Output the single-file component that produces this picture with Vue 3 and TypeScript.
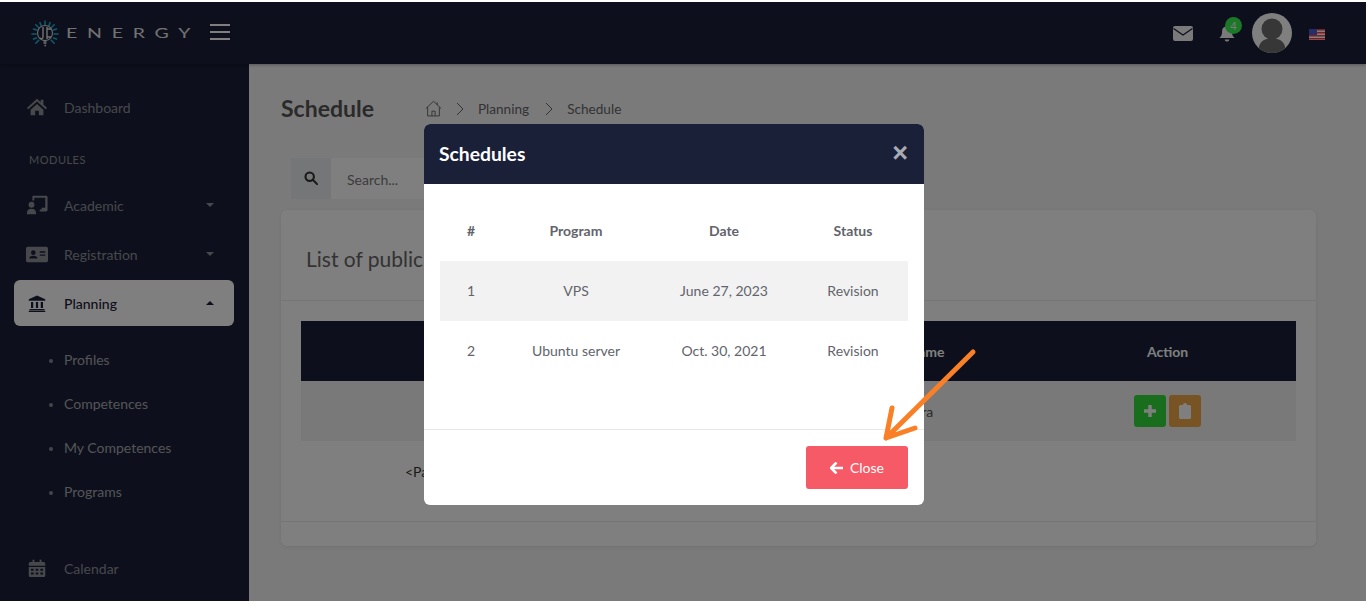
<template>
  <div class="page">
    <header class="topbar">
      <div class="brand">
        <svg class="logo" viewBox="0 0 28 28" width="28" height="28" fill="none">
          <g stroke="#1cb4d8" stroke-width="1.600" stroke-linecap="round">
            <path d="M14 1v4M1 14h4M23 14h4M4.800 4.800l3 3M23.200 4.800l-3 3M4.800 23.200l3-3M23.200 23.200l-3-3M9 2.500l1 3M19 2.500l-1 3M2.500 9l3 1M25.500 9l-3 1M2.500 19l3-1M25.500 19l-3-1" />
          </g>
          <circle cx="14" cy="13" r="7.500" stroke="#cfcfcf" stroke-width="1.200" />
          <path d="M12 7v10c0 2-2 2-3 1M16 7v12M20 9h-4M20 17h-4M12.500 21h3M12.500 23h3M13.500 25.500h1.500" stroke="#e6e6e6" stroke-width="1.400" />
        </svg>
        <span class="brand-name">ENERGY</span>
        <span class="burger"><i></i><i></i><i></i></span>
      </div>
      <div class="top-actions">
        <svg class="mail" viewBox="0 0 20 15" width="20" height="15">
          <rect width="20" height="15" rx="2" fill="#f4f4f4" />
          <path d="M0.500 2.500 10 9l9.500-6.500" fill="none" stroke="#1a2038" stroke-width="1.300" />
        </svg>
        <span class="bell">
          <svg viewBox="0 0 18 20" width="18" height="18">
            <path d="M9 1.500c3.500 0 5.500 2.500 5.500 6 0 3.500 1 5 3 7H.500c2-2 3-3.500 3-7 0-3.500 2-6 5.500-6z" fill="#f4f4f4" />
            <path d="M6.500 16h5c0 3-5 3-5 0z" fill="#f4f4f4" />
          </svg>
          <b class="badge">4</b>
        </span>
        <svg class="avatar" viewBox="0 0 40 40" width="40" height="40">
          <defs>
            <clipPath id="avatar-clip"><circle cx="20" cy="20" r="20" /></clipPath>
          </defs>
          <circle cx="20" cy="20" r="20" fill="#fff" />
          <g clip-path="url(#avatar-clip)" fill="#6e6e6e">
            <circle cx="20" cy="16" r="10.500" />
            <path d="M6 40c0-9 4-13 9-14h10c5 1 9 5 9 14z" />
          </g>
        </svg>
        <svg class="flag" viewBox="0 0 16 11" width="16" height="11">
          <rect width="16" height="11" fill="#fff" />
          <path d="M0 .7h16M0 3.700h16M0 6.700h16M0 9.700h16" stroke="#ff3a48" stroke-width="1.400" />
          <rect width="8" height="6" fill="#4a5cd0" />
        </svg>
      </div>
    </header>

    <div class="layout">
      <aside class="sidebar">
        <a class="nav-item">
          <svg class="nav-icon" viewBox="0 0 24 24"><path :d="icons.home" /></svg>
          <span>Dashboard</span>
        </a>
        <div class="nav-label">MODULES</div>
        <a
          v-for="item in modules"
          :key="item.label"
          class="nav-item"
          :class="{ active: item.active }"
        >
          <svg class="nav-icon" :class="{ small: item.active }" viewBox="0 0 24 24"><path :d="icons[item.icon]" fill-rule="evenodd" /></svg>
          <span>{{ item.label }}</span>
          <i class="caret" :class="{ up: item.active }"></i>
        </a>
        <ul class="subnav">
          <li v-for="sub in subItems" :key="sub">{{ sub }}</li>
        </ul>
        <a class="nav-item">
          <svg class="nav-icon small" viewBox="0 0 24 24"><path :d="icons.calendar" fill-rule="evenodd" /></svg>
          <span>Calendar</span>
        </a>
      </aside>

      <main class="content">
        <div class="title-row">
          <h1>Schedule</h1>
          <nav class="crumbs">
            <svg viewBox="0 0 16 16" width="17" height="17" fill="none" stroke="#666" stroke-width="0.900">
              <path d="M.800 8 8 1.200 15.200 8M2.500 6.800V15h11V6.800M6.500 15v-4.500h3V15M11.500 2.200v2.400" />
            </svg>
            <svg class="chev" viewBox="0 0 8 14" width="8" height="14" fill="none" stroke="#666"><path d="M1 1l6 6-6 6" /></svg>
            <span>Planning</span>
            <svg class="chev last" viewBox="0 0 8 14" width="8" height="14" fill="none" stroke="#666"><path d="M1 1l6 6-6 6" /></svg>
            <span>Schedule</span>
          </nav>
        </div>

        <div class="search">
          <span class="search-icon">
            <svg viewBox="0 0 16 16" width="14" height="14" fill="none" stroke="#333" stroke-width="2.400">
              <circle cx="6.500" cy="6.500" r="4.800" /><path d="M10 10l5 5" stroke-linecap="round" />
            </svg>
          </span>
          <span class="search-input">Search...</span>
        </div>

        <section class="card">
          <h2>List of public programs</h2>
          <div class="card-body">
            <div class="grid-row grid-head">
              <span></span><span>Name</span><span class="action-head">Action</span>
            </div>
            <div class="grid-row grid-data">
              <span></span>
              <span class="name-cell">Sara</span>
              <span class="actions">
                <button class="square green">
                  <svg viewBox="0 0 14 14" width="14" height="14"><path d="M5.300 1h3.400v4.300H13v3.400H8.700V13H5.300V8.700H1V5.300h4.300z" fill="#fff" /></svg>
                </button>
                <button class="square orange">
                  <svg viewBox="0 0 12 16" width="12" height="16">
                    <path d="M1.500 2H4a2 2 0 0 1 4 0h2.500A1.500 1.500 0 0 1 12 3.500v11a1.500 1.500 0 0 1-1.500 1.500h-9A1.500 1.500 0 0 1 0 14.500v-11A1.500 1.500 0 0 1 1.500 2z" fill="#fff" />
                  </svg>
                </button>
              </span>
            </div>
            <p class="pager">&lt;Pagination /&gt;</p>
          </div>
          <div class="card-foot"></div>
        </section>
      </main>
    </div>

    <div class="backdrop">
      <div class="modal">
        <div class="modal-head">
          <h3>Schedules</h3>
          <span class="modal-x">×</span>
        </div>
        <div class="modal-body">
          <table>
            <thead>
              <tr>
                <th class="c-num">#</th>
                <th class="c-prog">Program</th>
                <th class="c-date">Date</th>
                <th>Status</th>
              </tr>
            </thead>
            <tbody>
              <tr v-for="row in schedules" :key="row.id">
                <td>{{ row.id }}</td>
                <td>{{ row.program }}</td>
                <td>{{ row.date }}</td>
                <td>{{ row.status }}</td>
              </tr>
            </tbody>
          </table>
        </div>
        <div class="modal-foot">
          <button class="close-btn">
            <svg viewBox="0 0 14 12" width="14" height="12">
              <path d="M6.500.5 1 6l5.500 5.500M1.500 6H13" fill="none" stroke="#fff" stroke-width="2.600" />
            </svg>
            Close
          </button>
        </div>
      </div>
    </div>
  </div>

  <svg class="annotation" viewBox="0 0 1366 606" width="1366" height="606" fill="none" stroke="#f98026" stroke-width="5" stroke-linecap="round" stroke-linejoin="round">
    <path d="M973 352 886 438M892 408l-6 30 29-10" />
  </svg>
</template>

<script setup lang="ts">
type IconName = 'home' | 'academic' | 'card' | 'bank' | 'calendar'

const icons: Record<IconName, string> = {
  home: 'M12 3 1 13l1.500 1.500L12 6l9.500 8.500L23 13l-4-3.600V4h-3v2.700zM5 15l7-6.200 7 6.200v6h-5v-5h-4v5H5z',
  academic:
    'M8 2h14a1.500 1.500 0 0 1 1.500 1.500v14A1.500 1.500 0 0 1 22 19h-7v-2h2v-2h4V4H9v3H7V3a1 1 0 0 1 1-1zM6 8.500a3.200 3.200 0 1 1 0 6.400 3.200 3.200 0 0 1 0-6.400zM1 21c0-3.500 2-5 5-5s5 1.500 5 5v1H1z',
  card:
    'M2 4h20a2 2 0 0 1 2 2v13a2 2 0 0 1-2 2H2a2 2 0 0 1-2-2V6a2 2 0 0 1 2-2zm6 4a2.500 2.500 0 1 0 0 5 2.500 2.500 0 0 0 0-5zm-4.500 9h9c0-2-2-3-4.500-3s-4.500 1-4.500 3zM15 9v1.500h6V9zm0 3.500V14h6v-1.500z',
  bank: 'M12 2 1 7v2h22V7zM4 10.500h3v8H4zM10.500 10.500h3v8h-3zM17 10.500h3v8h-3zM2 20h20v1.500H2zM1 22.300h22V24H1z',
  calendar:
    'M6 1h2.500v3H15.500V1H18v3h3a2 2 0 0 1 2 2v3H1V6a2 2 0 0 1 2-2h3zM1 10.500h22V22a2 2 0 0 1-2 2H3a2 2 0 0 1-2-2zM4 13v2.500h3.500V13zm6.200 0v2.500h3.500V13zm6.300 0v2.500H20V13zM4 18v2.500h3.500V18zm6.200 0v2.500h3.500V18zm6.300 0v2.500H20V18z',
}

const modules: { label: string; icon: IconName; active?: boolean }[] = [
  { label: 'Academic', icon: 'academic' },
  { label: 'Registration', icon: 'card' },
  { label: 'Planning', icon: 'bank', active: true },
]

const subItems = ['Profiles', 'Competences', 'My Competences', 'Programs']

const schedules = [
  { id: 1, program: 'VPS', date: 'June 27, 2023', status: 'Revision' },
  { id: 2, program: 'Ubuntu server', date: 'Oct. 30, 2021', status: 'Revision' },
]
</script>

<style>
html,
body {
  margin: 0;
  background: #fff;
  overflow: hidden;
}
</style>

<style scoped>
.page {
  position: relative;
  height: 599px;
  margin-top: 2px;
  display: flex;
  flex-direction: column;
  overflow: hidden;
  font-family: Lato, 'Open Sans', sans-serif;
  font-size: 14px;
  color: #555;
  background: #f5f5f5;
}

.topbar {
  flex: 0 0 62px;
  display: flex;
  align-items: center;
  justify-content: space-between;
  background: #1a2038;
  box-shadow: 0 1px 3px rgba(0, 0, 0, 0.3);
  z-index: 1;
}
.brand {
  display: flex;
  align-items: center;
  padding-left: 31px;
}
.logo {
  margin-top: 1px;
}
.brand-name {
  display: inline-block;
  width: 133px;
  margin-left: 7px;
  font-size: 13px;
  letter-spacing: 6.500px;
  color: #e4e4e4;
  white-space: nowrap;
  transform: scaleX(1.500);
  transform-origin: left center;
}
.burger {
  display: flex;
  flex-direction: column;
  gap: 5px;
  margin-left: 11px;
  margin-top: -2px;
}
.burger i {
  display: block;
  width: 20px;
  height: 2px;
  background: #fff;
}
.top-actions {
  display: flex;
  align-items: center;
  padding-right: 41px;
}
.mail {
  margin-right: 25px;
}
.bell {
  position: relative;
  display: flex;
  margin: 2px 16px 0 0;
}
.badge {
  position: absolute;
  top: -8px;
  left: 7px;
  width: 17px;
  height: 17px;
  border-radius: 50%;
  background: #34f04e;
  color: #f4f4f4;
  font-size: 11px;
  font-weight: 400;
  line-height: 17px;
  text-align: center;
}
.avatar {
  margin-right: 17px;
}
.flag {
  margin-top: 2px;
}

.layout {
  flex: 1;
  display: flex;
  min-height: 0;
}

.sidebar {
  flex: 0 0 249px;
  box-sizing: border-box;
  padding: 20px 15px 0 14px;
  background: #1a2038;
  color: #8e9096;
  overflow: hidden;
}
.nav-item {
  display: flex;
  align-items: center;
  height: 46px;
  margin-bottom: 3px;
  padding: 0 20px 0 12px;
  border-radius: 6px;
}
.nav-item span {
  flex: 1;
}
.nav-icon {
  width: 22px;
  height: 22px;
  margin-right: 16px;
  fill: #8e9096;
}
.nav-icon.small {
  width: 18px;
  height: 18px;
  margin: 0 18px 0 2px;
}
.nav-item.active {
  margin-bottom: 0;
  background: #fff;
  color: #1a2038;
  font-weight: 500;
}
.nav-item.active .nav-icon {
  fill: #1a2038;
}
.nav-label {
  height: 30px;
  margin: 0 0 6px 15px;
  padding-top: 13px;
  font-size: 11px;
  line-height: 28px;
  letter-spacing: 0.500px;
}
.caret {
  width: 0;
  height: 0;
  border-left: 4.500px solid transparent;
  border-right: 4.500px solid transparent;
  border-top: 4.500px solid #8e9096;
}
.caret.up {
  border-top: 0;
  border-bottom: 4.500px solid #1a2038;
}
.subnav {
  margin: 12px 0 31px;
  padding: 0;
  list-style: none;
  color: #a8a9ad;
}
.subnav li {
  position: relative;
  height: 44px;
  padding-left: 50px;
  line-height: 44px;
}
.subnav li::before {
  content: '';
  position: absolute;
  left: 35px;
  top: 21px;
  width: 4px;
  height: 4px;
  border-radius: 50%;
  background: #8a8c92;
}

.content {
  flex: 1;
  min-width: 0;
  padding: 0 50px 0 32px;
}
.title-row {
  display: flex;
  align-items: center;
  height: 30px;
  margin-top: 29px;
}
h1 {
  margin: 0;
  font-size: 23px;
  font-weight: 700;
  color: #555;
}
.crumbs {
  display: flex;
  align-items: center;
  margin: 1px 0 0 51px;
  font-size: 13.600px;
  color: #666;
}
.chev {
  margin: 0 14px;
}
.chev.last {
  margin-left: 16px;
}

.search {
  display: flex;
  height: 41px;
  margin: 35px 0 11px 10px;
}
.search-icon {
  display: flex;
  align-items: center;
  justify-content: center;
  width: 40px;
  padding-bottom: 2px;
  box-sizing: border-box;
  background: #e9ecef;
}
.search-input {
  width: 400px;
  padding-left: 16px;
  background: #fff;
  color: #777;
  line-height: 43px;
}

.card {
  height: 336px;
  border-radius: 6px;
  background: #fff;
  box-shadow: 0 1px 4px rgba(0, 0, 0, 0.08);
  display: flex;
  flex-direction: column;
}
.card h2 {
  margin: 0;
  height: 91px;
  padding-left: 25px;
  box-sizing: border-box;
  border-bottom: 1px solid #ebebeb;
  font-size: 21px;
  font-weight: 400;
  line-height: 98px;
  color: #666;
  white-space: nowrap;
}
.card-body {
  flex: 1;
  padding: 20px 20px 0;
}
.grid-row {
  display: grid;
  grid-template-columns: 510px 230px 255px;
  height: 60px;
  align-items: center;
  text-align: center;
}
.grid-head {
  background: #1a2038;
  color: #fff;
  font-weight: 700;
}
.action-head {
  padding-right: 2px;
}
.grid-data {
  background: #f2f2f2;
}
.name-cell {
  padding-right: 12px;
}
.actions {
  display: flex;
  justify-content: center;
  gap: 3px;
  padding-right: 2px;
}
.square {
  display: flex;
  align-items: center;
  justify-content: center;
  width: 32px;
  height: 32px;
  padding: 0;
  border: 0;
  border-radius: 3px;
}
.green {
  background: #32dc3c;
}
.orange {
  background: #f0a848;
}
.pager {
  margin: 22px 0 0 104px;
  color: #333;
}
.card-foot {
  height: 24px;
  border-top: 1px solid #ebebeb;
}

.backdrop {
  position: absolute;
  inset: 0;
  z-index: 5;
  display: flex;
  justify-content: center;
  box-sizing: border-box;
  padding: 122px 18px 0 0;
  background: rgba(0, 0, 0, 0.5);
}
.modal {
  width: 500px;
  height: 381px;
  border-radius: 6px;
  background: #fff;
  overflow: hidden;
}
.modal-head {
  display: flex;
  align-items: center;
  justify-content: space-between;
  height: 60px;
  padding: 0 16px 0 15px;
  background: #1a2038;
}
.modal-head h3 {
  margin: -2px 0 0;
  font-size: 19.300px;
  font-weight: 700;
  color: #fff;
}
.modal-x {
  margin-top: -2px;
  font-family: 'Liberation Sans', sans-serif;
  font-size: 27px;
  font-weight: 700;
  line-height: 1;
  color: #a9abb3;
}
.modal-body {
  height: 246px;
  box-sizing: border-box;
  padding: 17px 16px 0;
  border-bottom: 1px solid #e9e9e9;
}
table {
  width: 468px;
  border-collapse: collapse;
  table-layout: fixed;
}
th,
td {
  box-sizing: border-box;
  height: 60px;
  padding: 0 0 2px;
  text-align: center;
  color: #62646c;
}
th {
  font-weight: 700;
  font-size: 14px;
}
.c-num {
  width: 62px;
}
.c-prog,
.c-date {
  width: 148px;
}
tbody tr:nth-child(odd) {
  background: #f2f2f2;
}
.modal-foot {
  display: flex;
  justify-content: flex-end;
  padding: 16px 16px 0;
}
.close-btn {
  display: flex;
  align-items: center;
  justify-content: center;
  gap: 6px;
  width: 102px;
  height: 43px;
  padding: 0;
  border: 0;
  border-radius: 3px;
  background: #f65a66;
  color: #fff;
  font-family: inherit;
  font-size: 14px;
}
.annotation {
  position: absolute;
  left: 0;
  top: 0;
  z-index: 10;
  pointer-events: none;
}
</style>
